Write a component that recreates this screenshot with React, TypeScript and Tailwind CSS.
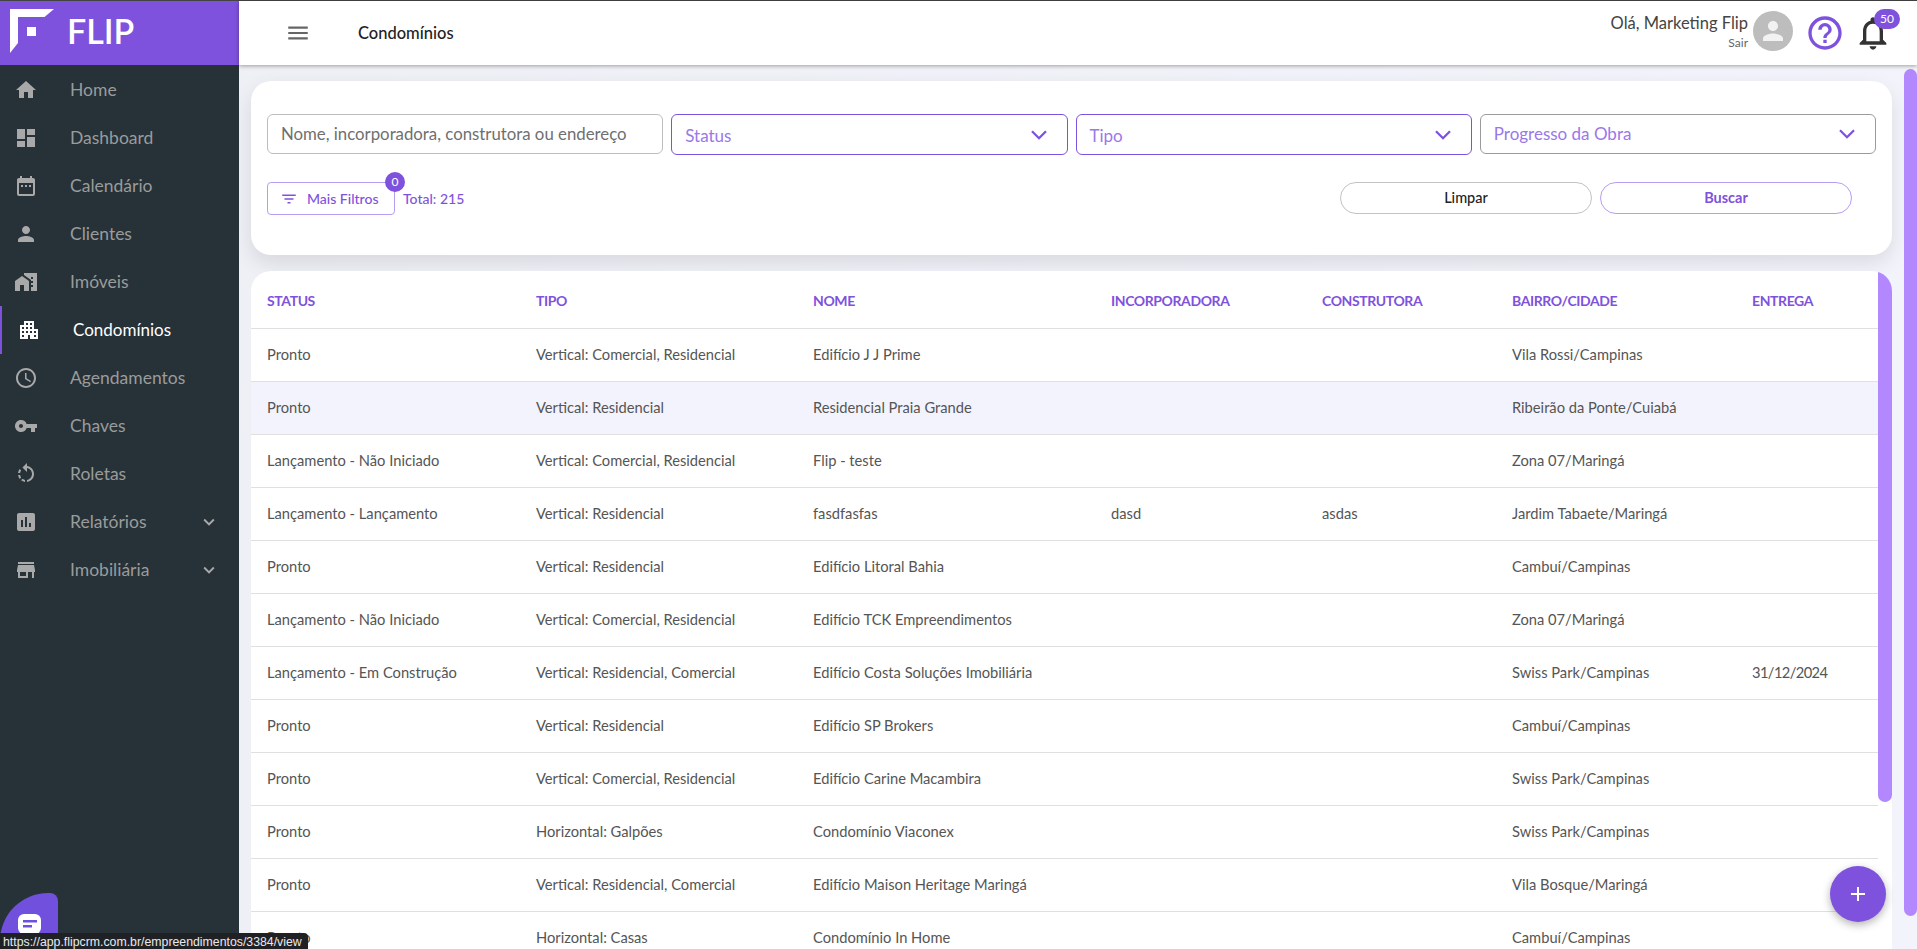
import React from "react";
import {
  MdHome, MdDashboard, MdDateRange, MdPerson, MdHomeWork, MdApartment, MdAccessTime, MdVpnKey,
  MdRotateLeft, MdAssessment, MdStore, MdExpandMore, MdMenu, MdFilterList, MdHelpOutline, MdNotificationsNone, MdAdd,
} from "react-icons/md";

const nav = [
  { label: "Home", Icon: MdHome },
  { label: "Dashboard", Icon: MdDashboard },
  { label: "Calendário", Icon: MdDateRange },
  { label: "Clientes", Icon: MdPerson },
  { label: "Imóveis", Icon: MdHomeWork },
  { label: "Condomínios", Icon: MdApartment, active: true },
  { label: "Agendamentos", Icon: MdAccessTime },
  { label: "Chaves", Icon: MdVpnKey },
  { label: "Roletas", Icon: MdRotateLeft },
  { label: "Relatórios", Icon: MdAssessment, more: true },
  { label: "Imobiliária", Icon: MdStore, more: true },
];

const cols = ["STATUS", "TIPO", "NOME", "INCORPORADORA", "CONSTRUTORA", "BAIRRO/CIDADE", "ENTREGA"];
const rows = [
  ["Pronto", "Vertical: Comercial, Residencial", "Edifício J J Prime", "", "", "Vila Rossi/Campinas", ""],
  ["Pronto", "Vertical: Residencial", "Residencial Praia Grande", "", "", "Ribeirão da Ponte/Cuiabá", ""],
  ["Lançamento - Não Iniciado", "Vertical: Comercial, Residencial", "Flip - teste", "", "", "Zona 07/Maringá", ""],
  ["Lançamento - Lançamento", "Vertical: Residencial", "fasdfasfas", "dasd", "asdas", "Jardim Tabaete/Maringá", ""],
  ["Pronto", "Vertical: Residencial", "Edifício Litoral Bahia", "", "", "Cambuí/Campinas", ""],
  ["Lançamento - Não Iniciado", "Vertical: Comercial, Residencial", "Edifício TCK Empreendimentos", "", "", "Zona 07/Maringá", ""],
  ["Lançamento - Em Construção", "Vertical: Residencial, Comercial", "Edifício Costa Soluções Imobiliária", "", "", "Swiss Park/Campinas", "31/12/2024"],
  ["Pronto", "Vertical: Residencial", "Edifício SP Brokers", "", "", "Cambuí/Campinas", ""],
  ["Pronto", "Vertical: Comercial, Residencial", "Edifício Carine Macambira", "", "", "Swiss Park/Campinas", ""],
  ["Pronto", "Horizontal: Galpões", "Condomínio Viaconex", "", "", "Swiss Park/Campinas", ""],
  ["Pronto", "Vertical: Residencial, Comercial", "Edifício Maison Heritage Maringá", "", "", "Vila Bosque/Maringá", ""],
  ["Pronto", "Horizontal: Casas", "Condomínio In Home", "", "", "Cambuí/Campinas", ""],
];
const grid = "grid grid-cols-[269px_277px_298px_211px_190px_240px_1fr] pl-4";

function Select({ label, active }: { label: string; active?: boolean }) {
  return (
    <div className={`min-w-0 flex items-center justify-between pl-[13px] pr-[20px] rounded-[6px] bg-white ${active ? "h-[41px] border border-[#7c52e0]" : "h-[40px] border border-[#9b9b9b]"}`}>
      <span className={`text-[17px] text-[#9a78ea] ${active ? "pt-0.5" : ""}`}>{label}</span>
      <svg width="16" height="10" viewBox="0 0 16 10" fill="none" stroke="#7c52e0" strokeWidth="2.300"><path d="M1 1.200 8 8.200 15 1.200" /></svg>
    </div>
  );
}

export default function App() {
  return (
    <div className="relative h-screen w-full overflow-hidden flex flex-col bg-[#f3f3fb] font-['Lato','Noto_Sans',sans-serif]">
      <div className="h-px bg-[#444444] shrink-0" />
      <div className="flex flex-1 min-h-0">
        <aside className="w-[239px] shrink-0 bg-[#263238] flex flex-col">
          <div className="h-[64px] bg-[#7f52dd] flex items-center shrink-0">
            <svg width="44" height="44" viewBox="0 0 44 44" className="ml-[10px] mb-[4px]" fill="#fff">
              <path d="M0 0H44L34.500 8H8V34L0 44Z" />
              <rect x="17" y="18" width="9" height="9" />
            </svg>
            <span className="ml-[13px] mb-[4px] text-[34px] font-semibold text-white leading-none">FLIP</span>
          </div>
          <nav className="pt-px">
            {nav.map(({ label, Icon, active, more }) => (
              <div key={label} className={`h-[48px] flex items-center ${active ? "border-l-[2px] border-[#7f52dd]" : ""}`}>
                <span className={`flex justify-center shrink-0 ${active ? "w-[54px] text-white" : "w-[52px] text-[#a9a9a9]"}`}>
                  <Icon size={24} />
                </span>
                <span className={`${active ? "ml-[17px] text-[17px] text-white" : "ml-[18px] text-[17.5px] text-[#9b9b9b]"}`}>{label}</span>
                {more && <MdExpandMore size={22} className="ml-auto mr-[19px] text-[#a9a9a9]" />}
              </div>
            ))}
          </nav>
        </aside>

        <div className="flex-1 min-w-0 flex flex-col">
          <header className="h-[64px] shrink-0 bg-white shadow-[0_1px_4px_rgba(0,0,0,0.35)] flex items-center z-10">
            <MdMenu size={26} className="ml-[46px] text-[#666666]" />
            <h1 className="ml-[47px] text-[16.5px] font-medium text-[#222222]">Condomínios</h1>
            <div className="ml-auto flex items-center mr-[24px]">
              <div className="flex flex-col items-end mb-[3px]">
                <span className="text-[16.500px] text-[#444444] leading-[22px]">Olá, Marketing Flip</span>
                <span className="text-[12px] text-[#666666] leading-[18px]">Sair</span>
              </div>
              <div className="ml-[5px] mb-[4px] w-[40px] h-[40px] rounded-full bg-[#bdbdbd] flex items-center justify-center text-[#f2f2f2]">
                <MdPerson size={30} />
              </div>
              <MdHelpOutline size={40} className="ml-[12px] text-[#7f52dd]" />
              <div className="relative ml-[8px] w-[40px] h-[40px] text-[#333333]">
                <MdNotificationsNone size={40} />
                <span className="absolute top-[-4px] right-[-7px] w-[26px] h-[20px] rounded-full bg-[#7f52dd] text-white text-[12px] flex items-center justify-center">50</span>
              </div>
            </div>
          </header>

          <main className="flex-1 min-h-0 overflow-hidden pl-3 pr-[25px] pt-4 bg-[linear-gradient(90deg,#efeff6,#f3f3fb)]">
            <section className="h-[174px] bg-white rounded-[20px] shadow-[0_8px_20px_rgba(0,0,0,0.1)] px-4 pt-[33px]">
              <div className="grid grid-cols-4 gap-2 items-start">
                <div className="min-w-0 h-[40px] border border-[#bdbdbd] rounded-[6px] flex items-center pl-[13px] text-[16.800px] text-[#6f6f6f] whitespace-nowrap">
                  Nome, incorporadora, construtora ou endereço
                </div>
                <Select label="Status" active />
                <Select label="Tipo" active />
                <Select label="Progresso da Obra" />
              </div>
              <div className="flex items-start mt-[27px]">
                <div className="relative h-[33px] w-[128px] border border-[#b79cf3] rounded-[4px] flex items-center pl-[12px] text-[#7f52dd]">
                  <MdFilterList size={18} />
                  <span className="ml-[9px] text-[14px] font-medium">Mais Filtros</span>
                  <span className="absolute top-[-11px] right-[-11px] w-[20px] h-[20px] rounded-full bg-[#7f52dd] text-white text-[12px] flex items-center justify-center">0</span>
                </div>
                <span className="ml-[8px] mt-[6px] text-[14px] font-medium text-[#7f52dd]">Total: 215</span>
                <div className="ml-auto mr-[24px] flex gap-2">
                  <button className="w-[252px] h-[32px] rounded-full border border-[#c2c2c2] text-[14.500px] font-medium text-[#222222]">Limpar</button>
                  <button className="w-[252px] h-[32px] rounded-full border border-[#b79cf3] text-[14.500px] font-bold text-[#7f52dd]">Buscar</button>
                </div>
              </div>
            </section>

            <section className="relative mt-4 bg-white rounded-t-[20px] overflow-hidden h-[700px]">
              <div className={`${grid} h-[58px] items-center border-b border-[#e0e0e0] mr-[14px] pt-[2px]`}>
                {cols.map((c) => (
                  <span key={c} className="text-[14px] tracking-[-0.4px] font-bold text-[#7f52dd]">{c}</span>
                ))}
              </div>
              {rows.map((r, i) => (
                <div key={i} className={`${grid} h-[53px] items-center border-b border-[#e0e0e0] mr-[14px] pb-px ${i === 1 ? "bg-[#f3f3fd]" : ""}`}>
                  {r.map((c, j) => (
                    <span key={j} className={`text-[14.700px] text-[#555555] whitespace-nowrap ${j === 6 ? "tracking-[-0.6px]" : ""}`}>{c}</span>
                  ))}
                </div>
              ))}
              <div className="absolute right-0 top-px w-[14px] h-[530px] rounded-b-full rounded-t-[14px] bg-[#b388ff]" />
            </section>
          </main>
        </div>
      </div>

      <div className="absolute top-[69px] right-0 w-[13px] h-[847px] rounded-full bg-[#b388ff]" />

      <button className="absolute left-[1830px] top-[866px] w-[56px] h-[56px] rounded-full bg-[#7f52dd] shadow-[0_3px_8px_rgba(0,0,0,0.3)] flex items-center justify-center text-white">
        <MdAdd size={24} />
      </button>

      <div className="absolute left-0 top-[893px] w-[58px] h-[70px] bg-[#7050dc] rounded-tl-[48px] rounded-tr-[8px] flex justify-center pt-[21px] pl-[1px]">
        <svg width="24" height="22" viewBox="0 0 24 22" fill="#fff">
          <rect width="23" height="20" rx="6" />
          <rect x="5" y="6" width="14" height="2.500" fill="#7050dc" />
          <rect x="5" y="11" width="9" height="2.500" fill="#7050dc" />
        </svg>
      </div>

      <div className="absolute left-0 bottom-0 h-[16px] w-[308px] bg-[#202124] rounded-tr-[4px] pl-[3px] font-['Liberation_Sans',sans-serif] text-[12.300px] leading-[18px] text-[#e8eaed] whitespace-nowrap">
        https://app.flipcrm.com.br/empreendimentos/3384/view
      </div>
    </div>
  );
}
